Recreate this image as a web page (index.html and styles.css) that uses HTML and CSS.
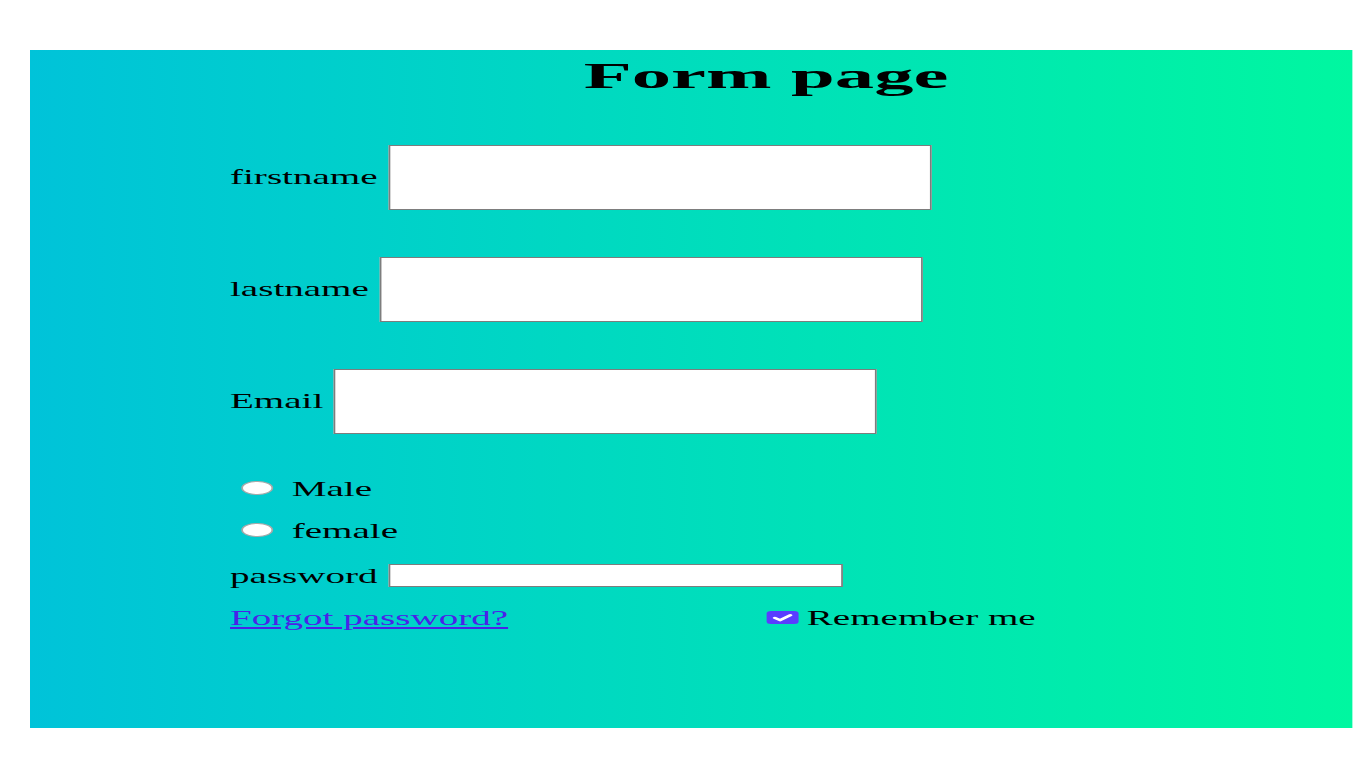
FILE: index.html
```html
<!DOCTYPE html>
<html lang="en">
<head>
<meta charset="utf-8">
<title>Form page</title>
<link rel="stylesheet" href="styles.css">
</head>
<body>
<div class="frame">
  <h1 class="title"><span class="title-text">Form page</span></h1>
  <form class="form">
    <div class="field">
      <label class="label" for="fn">firstname</label>
      <input class="big-input" id="fn" type="text">
    </div>
    <div class="field field-next">
      <label class="label" for="ln">lastname</label>
      <input class="big-input" id="ln" type="text">
    </div>
    <div class="field field-next">
      <label class="label" for="em">Email</label>
      <input class="big-input" id="em" type="email">
    </div>
    <div class="choice choice-first">
      <input class="radio" type="radio" name="gender" id="male">
      <label for="male">Male</label>
    </div>
    <div class="choice choice-second">
      <input class="radio" type="radio" name="gender" id="female">
      <label for="female">female</label>
    </div>
    <div class="pw-row">
      <label for="pw">password</label>
      <input class="pw-input" id="pw" type="password">
    </div>
    <div class="bottom-row">
      <a class="forgot" href="#">Forgot password?</a>
      <label class="remember">
        <span class="checkbox">
          <input class="check" type="checkbox" checked>
          <svg class="tick" viewBox="0 0 18 13" width="18" height="13" aria-hidden="true">
            <path d="M4.6 6.9 L7.6 9.2 L13.4 4.2" fill="none" stroke="#ffffff" stroke-width="2.3" stroke-linecap="round" stroke-linejoin="round"/>
          </svg>
        </span>
        <span>Remember me</span>
      </label>
    </div>
  </form>
</div>
</body>
</html>
```

FILE: styles.css
```css
html, body {
  margin: 0;
  padding: 0;
  background: #ffffff;
}

body {
  font-family: "Liberation Serif", "Times New Roman", serif;
  color: #000;
  overflow: hidden;
}

.frame {
  margin: 50px 0 0 30px;
  width: 744.8px;
  height: 678px;
  box-sizing: border-box;
  padding-top: 6px;
  background: linear-gradient(to right, #00c3d9, #00f7a0);
  transform: scaleX(1.775);
  transform-origin: 0 0;
}

.title {
  margin: 0 0 0 312px;
  font-size: 36px;
  line-height: 40px;
  font-weight: bold;
}

.title-text {
  display: inline-block;
  transform: scaleX(1.23);
  transform-origin: 0 0;
}

.form {
  margin: 49px 0 0 0;
  padding-left: 112.7px;
  display: flex;
  flex-direction: column;
  align-items: flex-start;
  font-size: 22px;
  line-height: 25px;
}

.field {
  display: flex;
  align-items: center;
  gap: 6px;
}

.field-next {
  margin-top: 47px;
}

.label {
  padding-bottom: 3px;
}

.big-input,
.pw-input {
  box-sizing: border-box;
  margin: 0;
  border: 1px solid #7d7d7d;
  border-radius: 0;
  background: #ffffff;
  padding: 1px 2px;
}

.big-input {
  width: 306px;
  height: 65px;
}

.choice {
  display: flex;
  align-items: center;
  height: 25px;
}

.choice-first {
  margin-top: 41.5px;
}

.choice-second {
  margin-top: 17px;
}

.radio {
  appearance: none;
  -webkit-appearance: none;
  box-sizing: border-box;
  width: 17.5px;
  height: 14px;
  margin: 0 10.6px 0 6.7px;
  border: 1px solid #a8a8a8;
  border-radius: 50%;
  background: #ffffff;
}

.pw-row {
  display: flex;
  align-items: center;
  gap: 6px;
  height: 25px;
  margin-top: 20.5px;
}

.pw-input {
  width: 256px;
  height: 23px;
}

.bottom-row {
  display: flex;
  align-items: center;
  height: 25px;
  margin-top: 17px;
}

.forgot {
  color: #4a22e8;
  text-decoration: underline;
}

.remember {
  display: flex;
  align-items: center;
  margin-left: 145.3px;
}

.checkbox {
  position: relative;
  display: block;
  width: 18px;
  height: 13px;
  margin-right: 5px;
}

.check {
  appearance: none;
  -webkit-appearance: none;
  display: block;
  width: 18px;
  height: 13px;
  margin: 0;
  border-radius: 2.5px;
  background: #5a3cff;
}

.tick {
  position: absolute;
  left: 0;
  top: 0;
  pointer-events: none;
}
```
